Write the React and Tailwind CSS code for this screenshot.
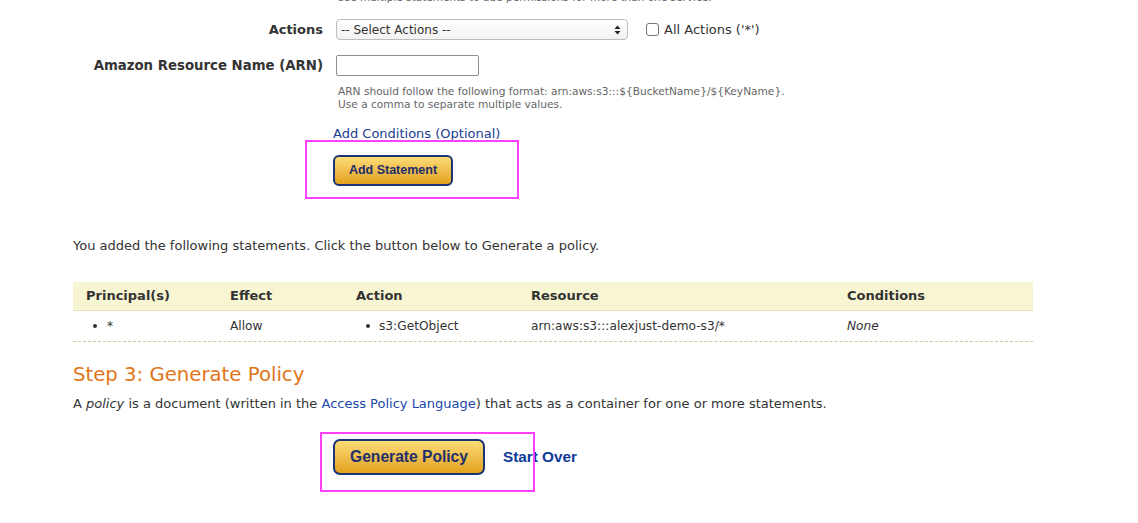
import React from "react";

const V = { fontFamily: '"DejaVu Sans", Verdana, sans-serif' };
const A = { fontFamily: '"Liberation Sans", Arial, sans-serif' };

export default function App() {
  return (
    <div className="relative w-[1138px] h-[523px] overflow-hidden bg-white text-[#333]" style={V}>
      {/* form section */}
      <div className="flex flex-col">
        <div className="mt-[-9px] ml-[337px] text-[10.5px] leading-[13px] text-[#666]">
          Use multiple statements to add permissions for more than one service.
        </div>
        <div className="flex items-center mt-[15px] h-[21px]">
          <div className="w-[323px] text-right pr-0 text-[13px] font-bold leading-none">Actions</div>
          <div className="ml-[13px] w-[292px] h-[21px] rounded-[4px] border border-[#bdbdbd] bg-gradient-to-b from-white to-[#f2f2f2] flex items-center justify-between pl-[4px] pr-[6px] text-[12px]">
            <span>-- Select Actions --</span>
            <svg width="7" height="10" viewBox="0 0 7 10">
              <path d="M3.5 0.5 L6.5 4 L0.5 4 Z" fill="#222" />
              <path d="M3.5 9.5 L6.5 6 L0.5 6 Z" fill="#222" />
            </svg>
          </div>
          <div className="ml-[18px] w-[13px] h-[13px] rounded-[3px] border border-[#767676] bg-white" />
          <div className="ml-[5px] text-[13px]">All Actions ('*')</div>
        </div>
        <div className="flex items-center mt-[15px] h-[21px]">
          <div className="w-[323px] text-right text-[13.3px] font-bold leading-none">Amazon Resource Name (ARN)</div>
          <div className="ml-[13px] w-[143px] h-[21px] border border-[#8f8f8f] rounded-[2px] bg-white" />
        </div>
        <div className="ml-[338px] mt-[9px] text-[10.6px] leading-[13px] text-[#666]">
          <div>ARN should follow the following format: arn:aws:s3:::${"{BucketName}"}/${"{KeyName}"}.</div>
          <div>Use a comma to separate multiple values.</div>
        </div>
        <a className="ml-[333px] mt-[15px] text-[13px] leading-[16px] text-[#1b3c8f]">Add Conditions (Optional)</a>
        <div className="ml-[333px] mt-[13px]">
          <button
            className="w-[120px] h-[31px] rounded-[6px] border-2 border-[#1d3474] bg-gradient-to-b from-[#fcdc74] to-[#e2a116] text-[12.5px] font-bold text-[#1e2f6b]"
            style={A}
          >
            Add Statement
          </button>
        </div>
        <div className="ml-[73px] mt-[52px] text-[13px] leading-[16px]">
          You added the following statements. Click the button below to Generate a policy.
        </div>

        {/* table */}
        <div className="ml-[73px] mt-[28px] w-[960px] text-[13px]">
          <div className="grid grid-cols-[144px_126px_175px_316px_199px] h-[29px] items-center bg-[#f8f6d2] border-b border-[#e6e3b4] font-bold">
            <div className="pl-[13px]">Principal(s)</div>
            <div className="pl-[13px]">Effect</div>
            <div className="pl-[13px]">Action</div>
            <div className="pl-[13px]">Resource</div>
            <div className="pl-[13px]">Conditions</div>
          </div>
          <div className="grid grid-cols-[144px_126px_175px_316px_199px] h-[31px] items-center border-b border-dashed border-[#c9cd9e] text-[12.2px]">
            <div className="pl-[20px] flex items-center"><span className="w-[4px] h-[4px] rounded-full bg-[#333] mr-[10px]" />*</div>
            <div className="pl-[13px]">Allow</div>
            <div className="pl-[23px] flex items-center"><span className="w-[4px] h-[4px] rounded-full bg-[#333] mr-[9px]" />s3:GetObject</div>
            <div className="pl-[13px]">arn:aws:s3:::alexjust-demo-s3/*</div>
            <div className="pl-[13px] italic">None</div>
          </div>
        </div>

        <h2 className="ml-[73px] mt-[21px] text-[19.7px] leading-[24px] text-[#e0761a]">Step 3: Generate Policy</h2>
        <div className="ml-[73px] mt-[9px] text-[13px] leading-[16px]">
          A <i>policy</i> is a document (written in the <a className="text-[#1a47a8]">Access Policy Language</a>) that acts as a container for one or more statements.
        </div>
        <div className="ml-[333px] mt-[27px] flex items-center">
          <button
            className="w-[152px] h-[36px] rounded-[7px] border-2 border-[#1d3474] bg-gradient-to-b from-[#fcdc74] to-[#e2a116] text-[15.6px] font-bold text-[#1e2f6b]"
            style={A}
          >
            Generate Policy
          </button>
          <a className="ml-[18px] text-[15.3px] font-bold text-[#0d3a96]" style={A}>Start Over</a>
        </div>
      </div>

      {/* annotation boxes */}
      <div className="absolute left-[305px] top-[140px] w-[214px] h-[59px] border-2 border-[#ff40ff] pointer-events-none" />
      <div className="absolute left-[320px] top-[432px] w-[215px] h-[60px] border-2 border-[#ff40ff] pointer-events-none" />
    </div>
  );
}
